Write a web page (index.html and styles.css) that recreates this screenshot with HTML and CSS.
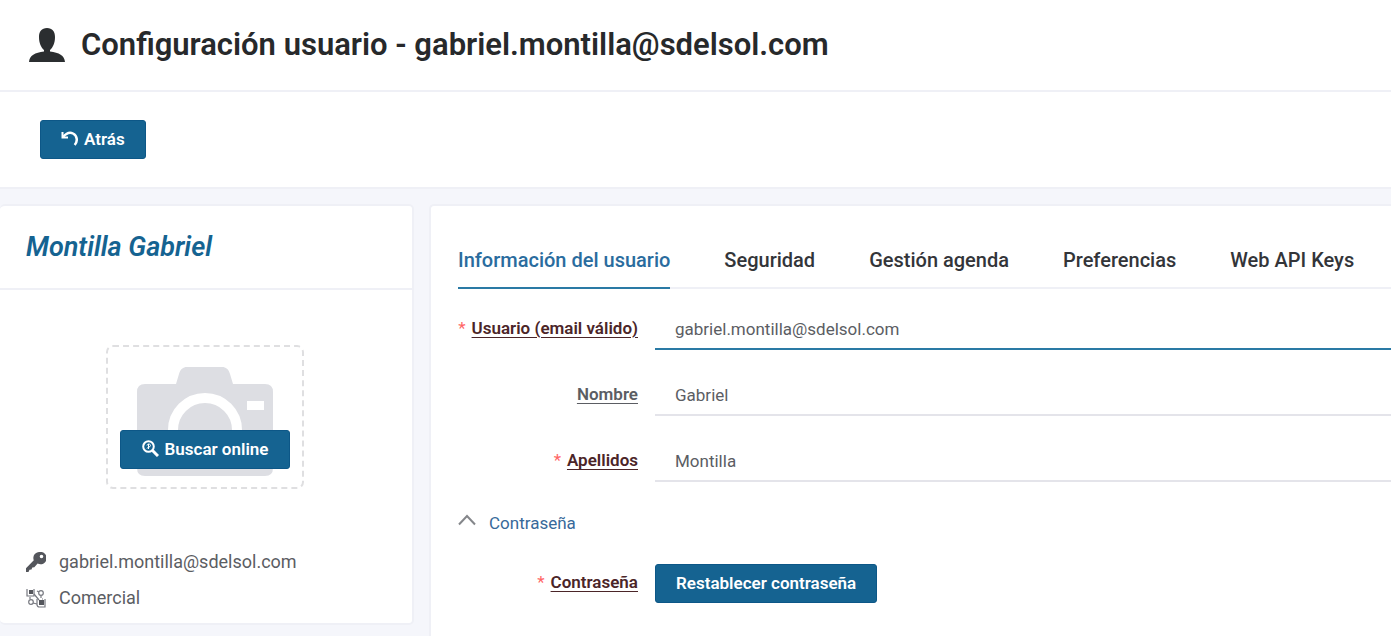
FILE: index.html
```html
<!DOCTYPE html>
<html lang="es">
<head>
    <meta charset="UTF-8">
    <meta name="viewport" content="width=device-width, initial-scale=1.0">
    <title>Configuración usuario</title>
    <link rel="stylesheet" href="styles.css">
</head>
<body>
    <header class="page-header">
        <svg class="icon-user" viewBox="0 0 36 34" aria-hidden="true">
            <path d="M18 0c-5.400 0-8 3.500-8 9 0 6 2 10.500 5 13v1.500C6 24.500.5 27.500 0 34h36c-.5-6.500-6-9.500-15-10.500V22c3-2.500 5-7 5-13 0-5.500-2.600-9-8-9z"/>
        </svg>
        <h1>Configuración usuario - gabriel.montilla@sdelsol.com</h1>
    </header>

    <div class="toolbar">
        <button type="button" class="btn">
            <svg class="icon-back" viewBox="0 0 17 16" aria-hidden="true">
                <path d="M1.500 1v5.500H7" stroke-width="2"/>
                <path d="M2 6C5 2.500 9 1 12 2.500c4.500 2.200 4.800 8 1.700 11.500" stroke-width="2.500"/>
            </svg>
            Atrás
        </button>
    </div>

    <main class="content">
        <!-- User card -->
        <aside class="card user-card">
            <h2>Montilla Gabriel</h2>
            <div class="photo-box">
                <svg class="icon-camera" viewBox="0 0 136 110" aria-hidden="true">
                    <path fill="#dddee3" d="M8 17h31l3-10c1.500-5 4-7 8-7h35c4 0 6.500 2 8 7l3 10h32q8 0 8 8v76q0 8-8 8H8q-8 0-8-8V25q0-8 8-8z"/>
                    <circle cx="68" cy="63" r="32" fill="none" stroke="#fff" stroke-width="10"/>
                    <rect x="110" y="34" width="17" height="9" fill="#fff"/>
                </svg>
                <button type="button" class="btn btn-search">
                    <svg class="icon-search" viewBox="0 0 17 17" aria-hidden="true">
                        <circle cx="6.500" cy="6.500" r="5.300" stroke-width="2"/>
                        <path d="M6.500 4v5M5 5.500c0-2 3.500-2 3.500 0S5 7 5 8.500" stroke-width="1"/>
                        <path d="M10.500 10.500l5.500 5.500" stroke-width="3"/>
                    </svg>
                    Buscar online
                </button>
            </div>
            <ul class="user-data">
                <li>
                    <svg class="icon-data" viewBox="0 0 20 20" aria-hidden="true">
                        <path fill="#54565c" fill-rule="evenodd" d="M13.500 0A6 6 0 0 0 7.800 8.300L0 16.300V20h2.500l1-2.200 2-.3.800-2 2-.3 3.300-3.600A6.200 6.200 0 1 0 13.500 0zM15.500 2.700a1.800 1.800 0 1 1 0 3.600 1.800 1.800 0 0 1 0-3.600z"/>
                    </svg>
                    gabriel.montilla@sdelsol.com
                </li>
                <li>
                    <svg class="icon-data" viewBox="0 0 20 20" aria-hidden="true">
                        <g fill="none" stroke="#777980" stroke-width="1.200">
                            <path d="M1 1v7h7V1M11 11v5.500q0 2.500 2.500 2.500H19v-8"/>
                            <circle cx="15" cy="5" r="2.300"/>
                            <circle cx="5" cy="14" r="2.300"/>
                            <path d="M8 6l5 6M11 3l2 1M15 8v2M7 15l4 1M4 9v2M16 11h1"/>
                        </g>
                        <path fill="#54565c" d="M3 2h4v4H3zM13 12h5v5h-5z"/>
                    </svg>
                    Comercial
                </li>
            </ul>
        </aside>

        <section class="card detail-card">
            <!-- Tabs -->
            <nav class="tabs">
                <a href="#informacion" class="active">Información del usuario</a>
                <a href="#seguridad">Seguridad</a>
                <a href="#agenda">Gestión agenda</a>
                <a href="#preferencias">Preferencias</a>
                <a href="#apikeys">Web API Keys</a>
            </nav>

            <form class="user-form">
                <div class="form-row">
                    <label class="required" for="usuario"><span>Usuario (email válido)</span></label>
                    <input class="current" type="text" id="usuario" value="gabriel.montilla@sdelsol.com">
                </div>
                <div class="form-row">
                    <label for="nombre"><span>Nombre</span></label>
                    <input type="text" id="nombre" value="Gabriel">
                </div>
                <div class="form-row">
                    <label class="required" for="apellidos"><span>Apellidos</span></label>
                    <input type="text" id="apellidos" value="Montilla">
                </div>

                <button type="button" class="section-toggle">
                    <svg class="icon-chevron" viewBox="0 0 18 12" aria-hidden="true">
                        <path d="M1 10.500L9 2l8 8.500"/>
                    </svg>
                    Contraseña
                </button>

                <div class="form-row">
                    <label class="required" for="restablecer"><span>Contraseña</span></label>
                    <button type="button" class="btn" id="restablecer">Restablecer contraseña</button>
                </div>
            </form>
        </section>
    </main>
</body>
</html>
```
FILE: styles.css
```css
* {
    box-sizing: border-box;
}
body {
    margin: 0;
    min-height: 100vh;
    display: flex;
    flex-direction: column;
    font-family: Roboto, "Liberation Sans", sans-serif;
    font-size: 17px;
    color: #5b5d63;
    background-color: #f5f6fb;
}
h1, h2, ul {
    margin: 0;
    padding: 0;
}
button {
    font-family: inherit;
    cursor: pointer;
}

/* Header */
.page-header {
    display: flex;
    align-items: center;
    gap: 16px;
    padding: 24px 29px;
    background-color: #fff;
    border-bottom: 2px solid #eff0f6;
}
.page-header h1 {
    font-size: 31px;
    line-height: 42px;
    font-weight: 600;
    color: #27292b;
}
.icon-user {
    width: 36px;
    height: 34px;
    fill: #2b2e30;
}
.toolbar {
    padding: 28px 40px;
    background-color: #fff;
    border-bottom: 2px solid #eff0f6;
}
.btn {
    display: inline-flex;
    align-items: center;
    gap: 6px;
    height: 39px;
    padding: 0 20px 2px;
    border: 1px solid #0d5787;
    border-radius: 3px;
    background-color: #156391;
    color: #fff;
    font-size: 17px;
    font-weight: 600;
    white-space: nowrap;
}
.btn svg {
    flex: none;
    fill: none;
    stroke: #fff;
}
.icon-back {
    width: 17px;
    height: 16px;
}
.icon-search {
    width: 17px;
    height: 17px;
}

/* Content */
.content {
    flex: 1;
    display: grid;
    grid-template-columns: 414px 1fr;
    gap: 15px;
    padding-top: 15px;
}
.card {
    background-color: #fff;
    border: 2px solid #eff0f6;
    border-radius: 5px;
}
.user-card {
    align-self: start;
    border-left: 0;
}
.user-card h2 {
    padding: 24px 26px;
    border-bottom: 2px solid #eff0f6;
    font-size: 27px;
    line-height: 34px;
    font-weight: 600;
    font-style: italic;
    color: #156391;
}
.photo-box {
    position: relative;
    display: flex;
    justify-content: center;
    width: 198px;
    height: 144px;
    margin: 55px auto 56px 106px;
    padding-top: 20px;
    border: 2px dashed #dfdfe1;
    border-radius: 7px;
}
.icon-camera {
    width: 136px;
    height: 110px;
}
.btn-search {
    position: absolute;
    left: 12px;
    right: 12px;
    bottom: 18px;
    justify-content: center;
    padding: 0 0 2px;
}
.user-data {
    display: grid;
    gap: 12px;
    padding: 5px 26px 13px;
    list-style: none;
    font-size: 18px;
    line-height: 24px;
}
.user-data li {
    display: flex;
    align-items: center;
    gap: 13px;
}
.icon-data {
    width: 20px;
    height: 20px;
}
.detail-card {
    border-right: 0;
    border-bottom: 0;
    border-radius: 5px 0 0 0;
    padding-left: 27px;
}
.tabs {
    display: flex;
    gap: 54px;
    padding-top: 39px;
    border-bottom: 2px solid #eff0f6;
    font-size: 20px;
    line-height: 30px;
    font-weight: 500;
    white-space: nowrap;
}
.tabs a {
    padding-bottom: 12px;
    margin-bottom: -2px;
    border-bottom: 2px solid transparent;
    color: #333539;
    text-decoration: none;
}
.tabs .active {
    color: #2a6c9e;
    border-bottom-color: #2a7aa5;
}

/* Form */
.user-form {
    display: grid;
    gap: 25px;
    padding-top: 20px;
}
.form-row {
    display: grid;
    grid-template-columns: 180px 1fr;
    align-items: center;
    justify-items: start;
    column-gap: 17px;
}
.form-row label {
    justify-self: end;
    padding-bottom: 3px;
    font-weight: 600;
    white-space: nowrap;
}
.form-row label span {
    text-decoration: underline;
    text-underline-offset: 3px;
}
.form-row .required {
    color: #4b2528;
}
.form-row .required::before {
    content: "*";
    margin-right: 6px;
    font-weight: 400;
    color: #f66;
}
.form-row input {
    width: 100%;
    height: 41px;
    padding: 0 20px;
    border: 0;
    border-bottom: 2px solid #e4e4ea;
    outline: 0;
    font-family: inherit;
    font-size: 17px;
    color: #5b5d63;
}
.form-row .current {
    border-bottom-color: #2a7aa5;
}
.section-toggle {
    justify-self: start;
    display: flex;
    align-items: center;
    gap: 13px;
    padding: 0;
    border: 0;
    background: none;
    font-size: 17px;
    line-height: 32px;
    color: #37699a;
}
.icon-chevron {
    width: 18px;
    height: 12px;
    margin-bottom: 6px;
    fill: none;
    stroke: #85878b;
    stroke-width: 2;
}
```
